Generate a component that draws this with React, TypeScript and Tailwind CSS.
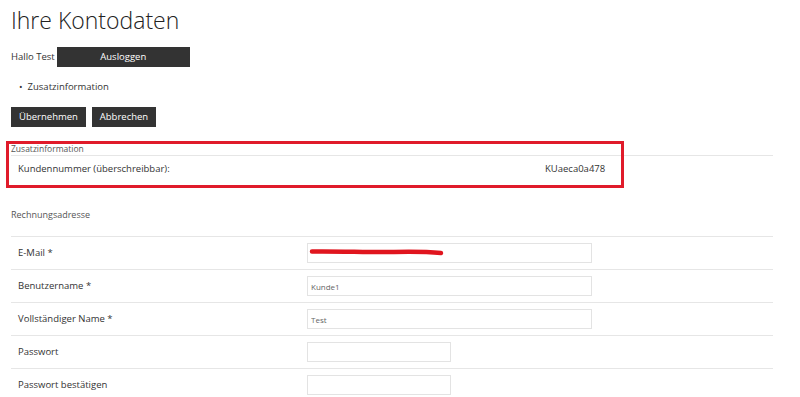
import React from "react";

const rows = [
  { label: "E-Mail *", value: "", wide: true, scribble: true },
  { label: "Benutzername *", value: "Kunde1", wide: true },
  { label: "Vollständiger Name *", value: "Test", wide: true },
  { label: "Passwort", value: "", wide: false },
  { label: "Passwort bestätigen", value: "", wide: false },
];

function FieldRow({ label, value, wide, scribble }: { label: string; value: string; wide: boolean; scribble?: boolean }) {
  return (
    <div className="flex h-[33px] items-start border-t border-[#e6e6e6]">
      <div className="w-[296px] pl-[7px] pt-[8px] text-[9.5px] leading-[16px] text-[#333]">{label}</div>
      <div className="relative pt-[6px]">
        <input
          readOnly
          value={value}
          className={`block h-[20px] ${wide ? "w-[285px]" : "w-[144px]"} border border-[#e3e3e3] bg-white px-[3px] text-[8px] text-[#666] outline-none`}
        />
        {scribble && (
          <svg className="absolute left-[2px] top-[11px]" width="136" height="8" viewBox="0 0 136 8">
            <path d="M3 3.5 C 30 3, 60 4.5, 85 4 S 115 3.5, 132 5" stroke="#e0151e" strokeWidth="4.5" fill="none" strokeLinecap="round" />
          </svg>
        )}
      </div>
    </div>
  );
}

export default function App() {
  return (
    <div className="min-h-[397px] bg-white font-['Open_Sans',sans-serif] text-[#333]">
      <div className="w-[773px] pl-[11px]">
        <h1 className="pt-[4px] text-[23px] font-light leading-[32px] text-[#222]">Ihre Kontodaten</h1>

        <div className="mt-[11px] flex items-center gap-[2px] text-[9.5px]">
          <span>Hallo Test</span>
          <button className="h-[20px] w-[133px] bg-[#333] text-[9.5px] text-white">Ausloggen</button>
        </div>

        <ul className="mt-[12px] pl-[8px] text-[9.5px] leading-[16px]">
          <li>
            •<span className="ml-[5px]">Zusatzinformation</span>
          </li>
        </ul>

        <div className="mt-[12px] flex gap-[6px]">
          <button className="h-[20px] w-[75px] bg-[#333] text-[9.5px] text-white">Übernehmen</button>
          <button className="h-[20px] w-[64px] bg-[#333] text-[9.5px] text-white">Abbrechen</button>
        </div>

        <div className="relative mt-[14px]">
          <div className="pt-[1px] text-[8.5px] leading-[13px] text-[#555]">Zusatzinformation</div>
          <div className="flex h-[32px] items-start border-t border-[#e6e6e6]">
            <div className="w-[534px] pl-[7px] pt-[5px] text-[9.5px] leading-[16px]">Kundennummer (überschreibbar):</div>
            <div className="pt-[5px] text-[9.5px] leading-[16px]">KUaeca0a478</div>
          </div>
          <div className="pointer-events-none absolute left-[-5px] top-0 h-[47px] w-[618px] border-[3px] border-[#e01b2a]" />
        </div>

        <div className="mt-[20px] h-[29px] text-[9px] leading-[16px] text-[#555]">Rechnungsadresse</div>

        <div>
          {rows.map((r) => (
            <FieldRow key={r.label} {...r} />
          ))}
        </div>
      </div>
    </div>
  );
}
